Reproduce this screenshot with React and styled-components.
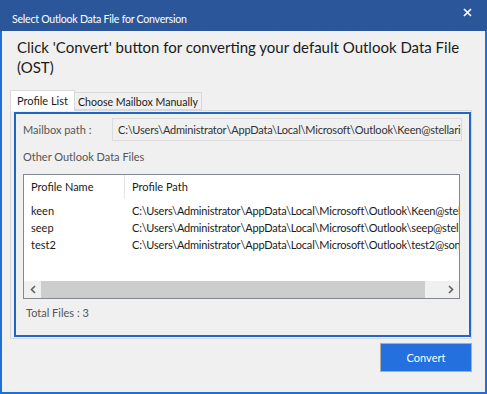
import React from "react";
import styled, { createGlobalStyle } from "styled-components";

const GlobalStyle = createGlobalStyle`
  html, body {
    margin: 0;
    padding: 0;
    background: #ffffff;
  }
  body {
    font-family: Lato, "Noto Sans", sans-serif;
  }
  * {
    box-sizing: border-box;
  }
`;

const Window = styled.div`
  width: 487px;
  height: 394px;
  display: flex;
  flex-direction: column;
  background: #f0f0f0;
  overflow: hidden;
`;

const TitleBar = styled.div`
  height: 31px;
  flex: none;
  display: flex;
  justify-content: space-between;
  align-items: flex-start;
  background: #2b579a;
  color: #ffffff;
`;

const TitleText = styled.div`
  padding: 12px 0 0 12px;
  font-size: 10.6px;
  letter-spacing: -0.25px;
  line-height: 14px;
`;

const CloseButton = styled.div`
  width: 9px;
  height: 9px;
  margin: 8px 15px 0 0;
  display: flex;
  svg {
    display: block;
  }
`;

const Body = styled.div`
  flex: 1;
  display: flex;
  flex-direction: column;
  border: 2px solid #1f6fd6;
  border-top: none;
  padding: 0 13px 0 8px;
`;

const Heading = styled.h1`
  margin: 6px 0 0 7px;
  height: 53px;
  font-size: 15px;
  font-weight: 400;
  line-height: 20px;
  color: #1a1a1a;
  white-space: nowrap;
`;

const TabStrip = styled.div`
  display: flex;
  align-items: flex-end;
  height: 20px;
`;

const Tab = styled.div`
  height: ${(p) => (p.$active ? "21px" : "18px")};
  margin-bottom: ${(p) => (p.$active ? "-1px" : "0")};
  padding: ${(p) => (p.$active ? "3px 6px 0 6px" : "2px 3px 0 3px")};
  border: 1px solid #d9d9d9;
  border-bottom: ${(p) => (p.$active ? "none" : "1px solid #d9d9d9")};
  margin-right: ${(p) => (p.$active ? "-1px" : "0")};
  background: ${(p) => (p.$active ? "#ffffff" : "#f0f0f0")};
  font-size: ${(p) => (p.$active ? "11px" : "10.6px")};
  line-height: 14px;
  color: #1a1a1a;
  position: relative;
  z-index: ${(p) => (p.$active ? 1 : 0)};
  white-space: nowrap;
`;

const TabPage = styled.div`
  height: 229px;
  border: 1px solid #d9d9d9;
  padding: 1px 0 1px 3px;
  background: #f0f0f0;
`;

const Frame = styled.div`
  height: 100%;
  border: 2px solid #1f66c6;
  padding: 4px 7px 0 7px;
  display: flex;
  flex-direction: column;
  font-size: 11px;
  color: #555555;
`;

const PathRow = styled.div`
  display: flex;
  align-items: center;
  height: 23px;
`;

const Label = styled.div`
  width: 89px;
  flex: none;
  line-height: 14px;
`;

const PathBox = styled.div`
  width: 351px;
  height: 23px;
  border: 1px solid #dcdcdc;
  background: #f0f0f0;
  padding: 0 0 0 5px;
  line-height: 21px;
  color: #333333;
  letter-spacing: -0.2px;
  white-space: nowrap;
  overflow: hidden;
`;

const Caption = styled.div`
  margin-top: 9px;
  line-height: 14px;
`;

const ListBox = styled.div`
  margin-top: 10px;
  width: 437px;
  height: 125px;
  border: 1px solid #828790;
  background: #ffffff;
  display: flex;
  flex-direction: column;
  color: #1a1a1a;
`;

const HeaderRow = styled.div`
  display: flex;
  height: 24px;
  flex: none;
`;

const HeaderCell = styled.div`
  width: ${(p) => p.$w}px;
  flex: none;
  padding: 5px 0 0 7px;
  line-height: 14px;
  border-right: ${(p) => (p.$sep ? "1px solid #e5e5e5" : "none")};
  white-space: nowrap;
`;

const Rows = styled.div`
  flex: 1;
  padding-top: 3px;
  overflow: hidden;
`;

const Row = styled.div`
  display: flex;
  height: 17px;
  line-height: 17px;
  white-space: nowrap;
`;

const Cell = styled.div`
  width: ${(p) => p.$w}px;
  flex: none;
  padding-left: 7px;
  overflow: hidden;
  letter-spacing: ${(p) => (p.$path ? "-0.2px" : "0")};
`;

const ScrollBar = styled.div`
  height: 17px;
  flex: none;
  display: flex;
  background: #f0f0f0;
`;

const Arrow = styled.div`
  width: 17px;
  flex: none;
  display: flex;
  align-items: center;
  justify-content: center;
`;

const Thumb = styled.div`
  width: 384px;
  background: #cdcdcd;
`;

const Track = styled.div`
  flex: 1;
`;

const Total = styled.div`
  margin: 7px 0 0 3px;
  line-height: 14px;
`;

const Footer = styled.div`
  display: flex;
  justify-content: flex-end;
  padding-top: 4px;
`;

const ConvertButton = styled.button`
  width: 92px;
  height: 29px;
  border: 1px solid #adadad;
  background: #2370de;
  color: #ffffff;
  font-family: Lato, "Noto Sans", sans-serif;
  font-size: 11px;
  padding: 0;
`;

const files = [
  { name: "keen", path: "C:\\Users\\Administrator\\AppData\\Local\\Microsoft\\Outlook\\Keen@stellarinfo.com.ost" },
  { name: "seep", path: "C:\\Users\\Administrator\\AppData\\Local\\Microsoft\\Outlook\\seep@stellarinfo.com.ost" },
  { name: "test2", path: "C:\\Users\\Administrator\\AppData\\Local\\Microsoft\\Outlook\\test2@sonicwall.com.ost" },
];

const ArrowIcon = ({ dir }) => (
  <svg width="6" height="9" viewBox="0 0 6 9">
    <path
      d={dir === "left" ? "M5 1 L1.5 4.5 L5 8" : "M1 1 L4.5 4.5 L1 8"}
      fill="none"
      stroke="#606060"
      strokeWidth="1.6"
    />
  </svg>
);

export default function App() {
  return (
    <>
      <GlobalStyle />
      <Window>
        <TitleBar>
          <TitleText>Select Outlook Data File for Conversion</TitleText>
          <CloseButton>
            <svg width="9" height="9" viewBox="0 0 9 9">
              <path d="M1 1 L8 8 M8 1 L1 8" stroke="#ffffff" strokeWidth="1.7" />
            </svg>
          </CloseButton>
        </TitleBar>
        <Body>
          <Heading>
            Click 'Convert' button for converting your default Outlook Data File
            <br />
            (OST)
          </Heading>
          <TabStrip>
            <Tab $active>Profile List</Tab>
            <Tab>Choose Mailbox Manually</Tab>
          </TabStrip>
          <TabPage>
            <Frame>
              <PathRow>
                <Label>Mailbox path :</Label>
                <PathBox>{files[0].path}</PathBox>
              </PathRow>
              <Caption>Other Outlook Data Files</Caption>
              <ListBox>
                <HeaderRow>
                  <HeaderCell $w={101} $sep>
                    Profile Name
                  </HeaderCell>
                  <HeaderCell $w={334}>Profile Path</HeaderCell>
                </HeaderRow>
                <Rows>
                  {files.map((f) => (
                    <Row key={f.name}>
                      <Cell $w={101}>{f.name}</Cell>
                      <Cell $w={334} $path>
                        {f.path}
                      </Cell>
                    </Row>
                  ))}
                </Rows>
                <ScrollBar>
                  <Arrow>
                    <ArrowIcon dir="left" />
                  </Arrow>
                  <Thumb />
                  <Track />
                  <Arrow>
                    <ArrowIcon dir="right" />
                  </Arrow>
                </ScrollBar>
              </ListBox>
              <Total>Total Files : 3</Total>
            </Frame>
          </TabPage>
          <Footer>
            <ConvertButton>Convert</ConvertButton>
          </Footer>
        </Body>
      </Window>
    </>
  );
}
